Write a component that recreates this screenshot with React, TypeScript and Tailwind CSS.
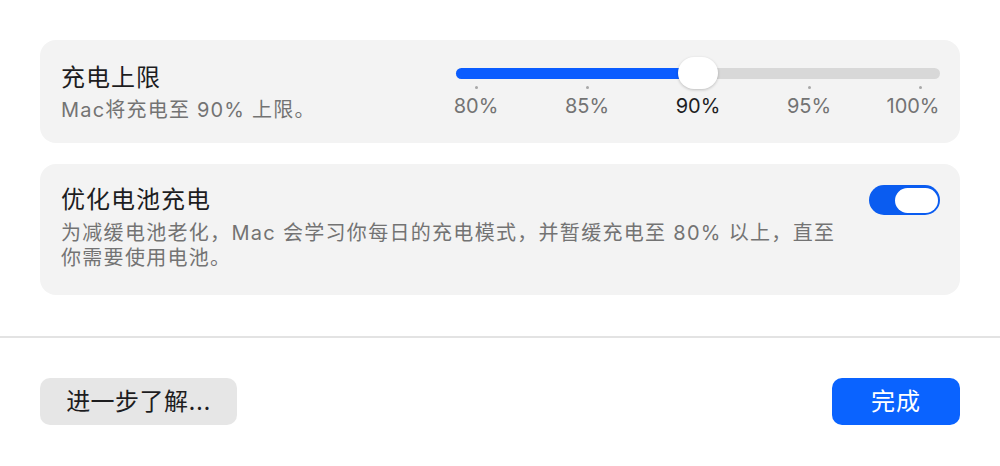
import React from "react";

const ticks = ["80%", "85%", "90%", "95%", "100%"];

function Slider() {
    return (
        <div className="w-[484px] pt-[28px]">
            <div className="relative h-[11px]">
                <div className="absolute inset-0 rounded-full bg-[#d8d8d8]" />
                <div className="absolute left-0 top-0 h-[11px] w-[242px] rounded-full bg-[#0a5cff]" />
                <div className="absolute left-[222px] top-[-11px] h-[32px] w-[40px] rounded-full bg-white shadow-[0_1px_3px_rgba(0,0,0,0.22)]" />
            </div>
            <div className="mt-[7px] flex justify-between px-[20px]">
                {ticks.map((t) => (
                    <div key={t} className="flex w-0 flex-col items-center">
                        <div className="h-[3px] w-[3px] rounded-full bg-[#a8a8a8]" />
                        <span
                            className={
                                "mt-[5px] whitespace-nowrap text-[20px] leading-[24px] " +
                                (t === "90%" ? "text-[#1d1d1f]" : "text-[#737373]") +
                                (t === "100%" ? " mr-[14px]" : "")
                            }
                        >
                            {t}
                        </span>
                    </div>
                ))}
            </div>
        </div>
    );
}

function Toggle() {
    return (
        <div className="flex h-[30px] w-[71px] items-center justify-end rounded-full bg-[#0a5cf0] pr-[2px]">
            <div className="h-[25px] w-[43px] rounded-full bg-white" />
        </div>
    );
}

export default function App() {
    return (
        <div
            className="h-[466px] w-[1000px] bg-white"
            style={{ fontFamily: '"Inter", "Noto Sans CJK SC", sans-serif' }}
        >
            <div className="px-[40px] pt-[40px]">
                {/* 充电上限 */}
                <div className="flex h-[103px] justify-between rounded-[16px] bg-[#f3f3f3] pl-[21px] pr-[20px]">
                    <div className="pt-[23px]">
                        <div className="text-[24px] leading-[30px] tracking-[1px] text-[#1d1d1f]">充电上限</div>
                        <div className="mt-[4px] text-[20px] leading-[26px] tracking-[1.2px] text-[#737373]">
                            Mac将充电至 90% 上限。
                        </div>
                    </div>
                    <Slider />
                </div>

                {/* 优化电池充电 */}
                <div className="mt-[21px] flex h-[131px] justify-between rounded-[16px] bg-[#f3f3f3] pl-[21px] pr-[20px] pt-[21px]">
                    <div className="w-[790px]">
                        <div className="text-[24px] leading-[30px] tracking-[1px] text-[#1d1d1f]">优化电池充电</div>
                        <div className="mt-[6px] whitespace-nowrap text-[20px] leading-[25px] tracking-[1.3px] text-[#737373]">
                            为减缓电池老化，Mac 会学习你每日的充电模式，并暂缓充电至 80% 以上，直至
                            <br />
                            你需要使用电池。
                        </div>
                    </div>
                    <Toggle />
                </div>
            </div>

            <div className="mt-[41px] h-[2px] w-full bg-[#e3e3e3]" />

            <div className="mt-[40px] flex justify-between px-[40px]">
                <button className="h-[47px] w-[197px] rounded-[10px] bg-[#e6e6e6] text-[24px] tracking-[0.5px] text-[#1d1d1f]">
                    进一步了解...
                </button>
                <button className="h-[47px] w-[128px] rounded-[10px] bg-[#0a63ff] text-[24px] tracking-[1px] text-white">
                    完成
                </button>
            </div>
        </div>
    );
}
